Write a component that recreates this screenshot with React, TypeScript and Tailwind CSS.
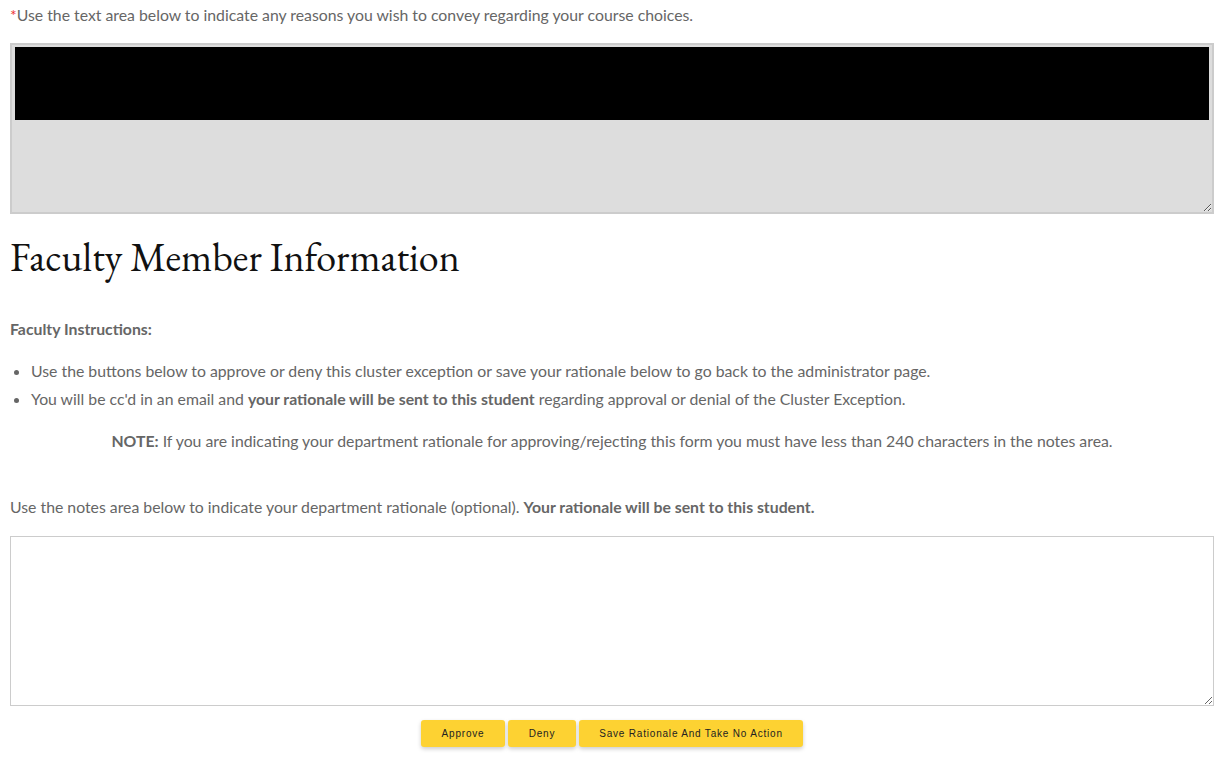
export default function App() {
  return (
    <div className="min-h-[760px] bg-white pl-[10px] pr-[9px] text-[15.8px] text-[#666] font-['Lato',sans-serif]">
      <p className="pt-[4px] leading-[22px]">
        <span className="text-[#e33]">*</span>Use the text area below to indicate any reasons you wish to convey regarding your course choices.
      </p>
      <div className="relative mt-[17px] h-[171px]">
        <textarea
          readOnly
          className="block h-full w-full border-2 border-[#ccc] bg-[#ddd] outline-none"
        />
        <div className="absolute left-[5px] right-[5px] top-[4px] h-[73px] bg-black" />
      </div>
      <h1 className="mt-[18px] text-[40px] leading-[50px] text-[#111] font-['EB_Garamond','Liberation_Serif',serif]">
        Faculty Member Information
      </h1>
      <p className="mt-[36px] font-bold leading-[22px]">Faculty Instructions:</p>
      <ul className="mt-[17px] list-disc pl-[21px] leading-[28px]">
        <li>Use the buttons below to approve or deny this cluster exception or save your rationale below to go back to the administrator page.</li>
        <li>
          You will be cc'd in an email and <b>your rationale will be sent to this student</b> regarding approval or denial of the Cluster Exception.
        </li>
      </ul>
      <p className="mt-[17px] text-center leading-[22px]">
        <b>NOTE:</b> If you are indicating your department rationale for approving/rejecting this form you must have less than 240 characters in the notes area.
      </p>
      <p className="mt-[44px] leading-[22px]">
        Use the notes area below to indicate your department rationale (optional). <b>Your rationale will be sent to this student.</b>
      </p>
      <textarea
        readOnly
        className="mt-[18px] block h-[170px] w-full border border-[#ccc] bg-white outline-none"
      />
      <div className="mt-[14px] flex justify-center gap-[3px] font-['Liberation_Sans',Arial,sans-serif] text-[10px] tracking-[0.8px] text-[#222]">
        <button className="h-[27px] w-[84px] rounded-[3px] bg-[#fdd232] shadow-[0_2px_4px_rgba(0,0,0,0.2)]">Approve</button>
        <button className="h-[27px] w-[68px] rounded-[3px] bg-[#fdd232] shadow-[0_2px_4px_rgba(0,0,0,0.2)]">Deny</button>
        <button className="h-[27px] w-[224px] rounded-[3px] bg-[#fdd232] shadow-[0_2px_4px_rgba(0,0,0,0.2)]">Save Rationale And Take No Action</button>
      </div>
    </div>
  );
}
